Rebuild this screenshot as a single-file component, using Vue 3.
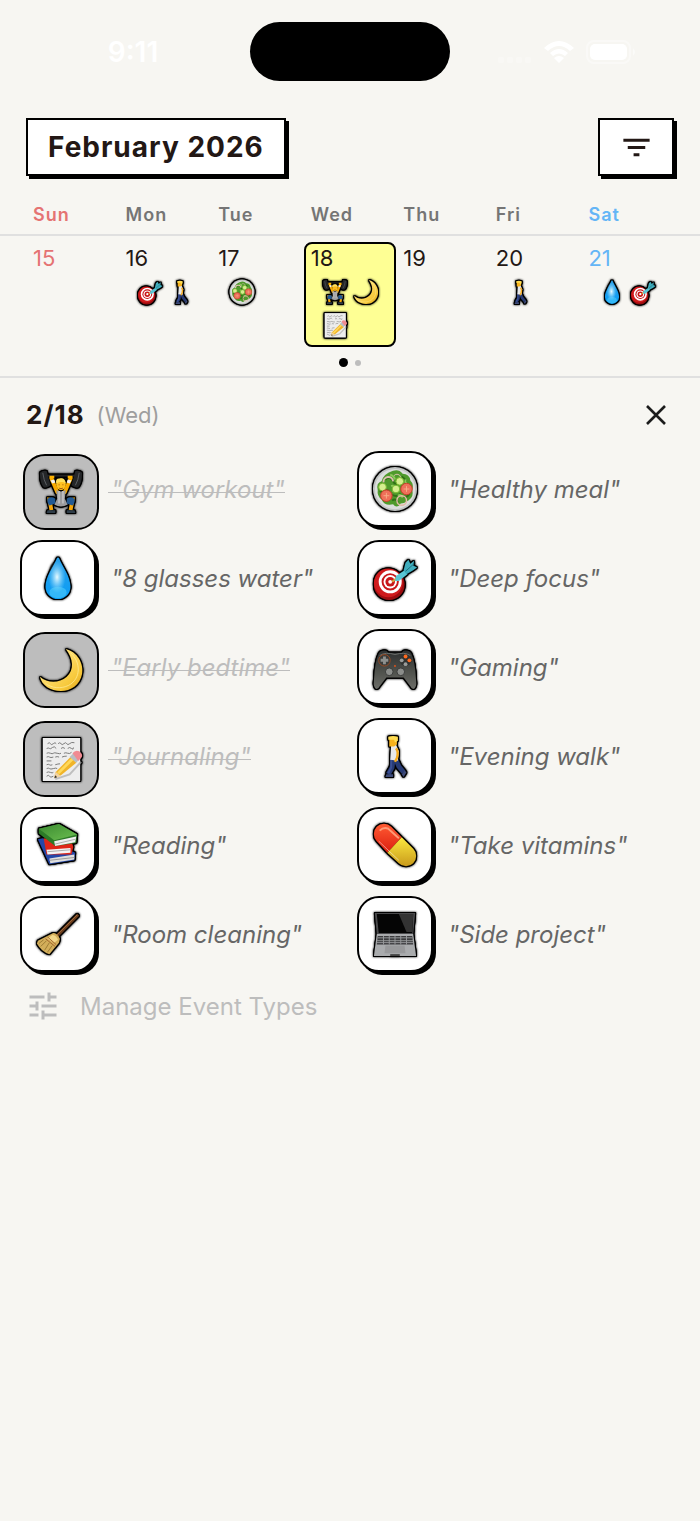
<template>
  <div class="page">
    <!-- icon sprites -->
    <svg class="sprites" aria-hidden="true">
      <defs>
        <linearGradient id="g-drop" x1="0" y1="0" x2="0" y2="1">
          <stop offset="0" stop-color="#2a9fe8" />
          <stop offset="1" stop-color="#0a9df5" />
        </linearGradient>
        <radialGradient id="g-drop-in" cx="0.5" cy="0.5" r="0.5">
          <stop offset="0" stop-color="#e9fbff" />
          <stop offset="1" stop-color="#8fdcff" stop-opacity="0" />
        </radialGradient>
        <linearGradient id="g-moon" x1="0" y1="0" x2="1" y2="1">
          <stop offset="0.3" stop-color="#ffe27a" />
          <stop offset="0.75" stop-color="#f7c83a" />
          <stop offset="1" stop-color="#d79a16" />
        </linearGradient>
        <linearGradient id="g-pad" x1="0" y1="0" x2="0" y2="1">
          <stop offset="0" stop-color="#2c2f30" />
          <stop offset="0.5" stop-color="#4c4e49" />
          <stop offset="1" stop-color="#6c6d68" />
        </linearGradient>
        <linearGradient id="g-green" x1="0" y1="0" x2="1" y2="1">
          <stop offset="0" stop-color="#3b8a31" />
          <stop offset="1" stop-color="#6cbf50" />
        </linearGradient>
        <linearGradient id="g-red" x1="0" y1="0" x2="0" y2="1">
          <stop offset="0" stop-color="#ff5a32" />
          <stop offset="1" stop-color="#dc1f10" />
        </linearGradient>
        <linearGradient id="g-yellow" x1="0" y1="0" x2="0" y2="1">
          <stop offset="0" stop-color="#fbe93f" />
          <stop offset="1" stop-color="#c99a1b" />
        </linearGradient>
      </defs>

      <symbol id="icon-gym" viewBox="0 0 48 48">
        <path d="M8 7 40 7" stroke="#222" stroke-width="2" />
        <path d="M2 4Q5 1 9 2L13 17Q10 20 6 19Q2 15 2 4ZM46 4Q43 1 39 2L35 17Q38 20 42 19Q46 15 46 4Z" fill="#242628" />
        <path d="M5 4Q6 12 9 17M43 4Q42 12 39 17" fill="none" stroke="#5c6064" stroke-width="1" />
        <path d="M14 10 20 24M34 10 28 24" stroke="#f7a900" stroke-width="4" stroke-linecap="round" />
        <path d="M12 7h5v3h-5zM31 7h5v3h-5z" fill="#ffb300" />
        <path d="M13 12l4-1 1 3-3 1zM35 12l-4-1-1 3 3 1z" fill="#f2f2f2" />
        <path d="M19 22Q24 25 29 22L28 31 31 37Q24 41 17 37L20 31Z" fill="#9b9b9d" />
        <path d="M22 23 22 36M26 23 26 36" stroke="#bcbcbe" stroke-width="2" />
        <path d="M17 33 12 32 14 43M31 33 36 32 34 43" fill="none" stroke="#f5a60a" stroke-width="4" />
        <path d="M10 31Q14 28 18 31L18 36 12 38Q9 35 10 31ZM38 31Q34 28 30 31L30 36 36 38Q39 35 38 31Z" fill="#235a94" />
        <path d="M10 43H18V46H9ZM30 43H38L39 46H30Z" fill="#2e3c48" />
        <ellipse cx="24" cy="16" rx="5" ry="6" fill="#ffc020" />
        <path d="M19 15Q18 10 22 10 28 8 29 15Q25 12 19 15Z" fill="#ffe05c" />
        <path d="M22 16v1M26 16v1M22 20q2 1 4 0" stroke="#9a5810" stroke-width="1" fill="none" />
      </symbol>

      <symbol id="icon-drop" viewBox="0 0 48 48">
        <path d="M23 3Q24 2 25 3C29 13 37 22 37 33A13 13 0 0 1 11 33C11 22 19 13 23 3Z" fill="url(#g-drop)" />
        <ellipse cx="23" cy="23" rx="9" ry="17" fill="url(#g-drop-in)" />
        <ellipse cx="24" cy="39" rx="9" ry="6" fill="#6fe0ff" opacity="0.4" />
      </symbol>

      <symbol id="icon-moon" viewBox="0 0 48 48">
        <path d="M29 2C41 5 48 17 46 28 44 40 34 46 24 46 13 46 4 40 2 31 10 38 22 38 30 31 38 24 37 12 29 2Z" fill="url(#g-moon)" />
        <path d="M34 6C45 16 45 33 32 40 24 44 14 43 8 38" fill="none" stroke="#fff0a0" stroke-width="1" opacity="0.7" />
      </symbol>

      <symbol id="icon-note" viewBox="0 0 48 48">
        <path d="M5 2H44V47H5Z" fill="#ededed" />
        <g fill="none" stroke="#777" stroke-width="1">
          <path d="M10 8q2-2 3 0t3 0 3 0M21 8q2-2 3 0t3 0 3 0 3 0 5-1" />
          <path d="M9 13q2-1 3 0t3-1 4 1M24 13q2-2 4 0M31 13q2-2 4 0t2-1" />
          <path d="M9 18q2-1 4 0t3 0 4 0 4 0M27 18q2-1 4 0t4-1" />
          <path d="M9 22q2-1 3 0t4 0M18 22q2-1 4 0M25 22q2-1 5-1" />
          <path d="M9 26h5M9 30q2-1 3 0t3 0M18 30q3-1 5-1M9 34q2-1 3 0t4 0 4 0M9 38q2-1 4 0t3 0M9 42q2-2 3 0t4 0" />
        </g>
        <path d="M18 45 33 40 45 27" fill="none" stroke="#aaa" stroke-width="2" opacity="0.7" />
        <path d="M18 38 34 22 40 28 24 41 17 44Z" fill="#f0b429" />
        <path d="M20 38 35 23 37 25 22 40Z" fill="#ffd95a" />
        <path d="M18 37 24 42 17 44Z" fill="#f2d3a0" />
        <path d="M17 44 18 41 20 43Z" fill="#333" />
        <path d="M33 22 37 18 43 24 40 28Z" fill="#b7bec4" />
        <path d="M36 18Q39 14 43 16 48 20 45 23L42 26Z" fill="#f08a92" />
      </symbol>

      <symbol id="icon-books" viewBox="0 0 48 48">
        <path d="M3 18 8 17 42 32 41 40 15 44Z" fill="#2447a8" />
        <path d="M15 38 41 34 41 39 16 43Z" fill="#dedede" />
        <path d="M15 40 41 37" stroke="#999" stroke-width="1" />
        <path d="M9 17 38 20 40 26 38 34 12 34Z" fill="#df2618" />
        <path d="M12 29 37 27 37 32 13 34Z" fill="#f4f4f4" />
        <path d="M13 31 37 29" stroke="#aaa" stroke-width="1" />
        <path d="M4 7 25 2 44 13 43 22 21 25 4 12Z" fill="#2d7a28" />
        <path d="M4 7 25 2 44 13 20 19Z" fill="url(#g-green)" />
        <path d="M20 20 43 15 42 21 21 25Z" fill="#efefef" />
        <path d="M21 23 42 18" stroke="#aaa" stroke-width="1" />
      </symbol>

      <symbol id="icon-broom" viewBox="0 0 48 48">
        <path d="M22 27 45 4" stroke="#6b3d1c" stroke-width="3" />
        <path d="M22 26 44 4" stroke="#a0683b" stroke-width="1" />
        <path d="M19 23Q23 23 26 29L25 33 15 45Q7 43 2 34L3 31Z" fill="#d3ae5a" />
        <path d="M18 25Q22 25 24 30L20 33 13 29Z" fill="#f3d789" />
        <path d="M13 27 22 35M11 29 21 37" stroke="#a2622c" stroke-width="1" />
        <path d="M12 31 6 37M15 33 10 41M18 36 13 43M9 30 4 34" stroke="#9b7a33" stroke-width="1" />
      </symbol>

      <symbol id="icon-salad" viewBox="0 0 48 48">
        <circle cx="24" cy="24" r="23" fill="#c0c3c2" />
        <circle cx="24" cy="24" r="21" fill="#dcdedd" />
        <path d="M22 5Q28 3 32 8 39 8 40 15 44 19 42 25 44 32 38 36 34 39 30 39 26 45 22 40 13 42 10 35 5 31 6 25 4 18 10 16 12 8 22 5Z" fill="#4f9a2c" />
        <path d="M14 14q5-4 8 2t8-2M8 27q6-3 10-1M21 30q5 3 9-1M31 11q5 3 5 9M21 36q4-3 6 2M33 32q4 1 6-3" fill="none" stroke="#2f7017" stroke-width="2" />
        <path d="M19 9q4 1 5 5M35 14q-1 5 4 6M20 21q4-2 2 6M27 31q3-2 5 2" fill="none" stroke="#8bc95a" stroke-width="2" />
        <path d="M12 17a5 5 0 0 1 10-1" fill="none" stroke="#dcc0ae" stroke-width="2" />
        <path d="M23 10a4 4 0 0 1 7 2" fill="none" stroke="#dcc0ae" stroke-width="1" />
        <g fill="#d5ef8f" stroke="#76b62e" stroke-width="1">
          <circle cx="11" cy="22" r="4" />
          <circle cx="29" cy="16" r="4" />
          <circle cx="25" cy="24" r="4" />
        </g>
        <g fill="#ee705a" stroke="#cc3a2a" stroke-width="1">
          <circle cx="15" cy="31" r="6" />
          <circle cx="36" cy="24" r="6" />
        </g>
        <path d="M15 28v6M12 31h6M36 21v6M33 24h6" stroke="#f8ac86" stroke-width="1" />
        <circle cx="31" cy="36" r="5" fill="none" stroke="#e3b9a8" stroke-width="1.5" />
      </symbol>

      <symbol id="icon-target" viewBox="0 0 48 48">
        <circle cx="18" cy="31" r="16" fill="#9c0d10" />
        <circle cx="17" cy="29" r="15" fill="#cf1a1c" />
        <g transform="translate(19 28)">
          <circle r="12" fill="#fff" />
          <circle r="9" fill="#c9171a" />
          <circle r="7" fill="#fff" />
          <circle r="5" fill="#c9171a" />
          <circle r="2" fill="#fff" />
        </g>
        <path d="M21 28 26 24" stroke="#d9a43c" stroke-width="2" />
        <path d="M25 22 34 16 37 20 28 27 24 27Z" fill="#58c5d4" />
        <path d="M33 16 35 8 38 5 40 9 44 6 43 11 47 13 43 16 36 20Z" fill="#3fadbd" />
        <path d="M35 17 44 9" stroke="#1b6f7d" stroke-width="1" />
      </symbol>

      <symbol id="icon-gamepad" viewBox="0 0 48 48">
        <path d="M7 10Q9 6 15 7L17 9H31L33 7Q39 6 41 10 45 18 46 38 47 46 43 47 41 46 40 44L33 35H15L8 44Q7 46 5 47 1 46 2 38 3 18 7 10Z" fill="url(#g-pad)" />
        <path d="M8 12Q14 8 24 11 34 8 40 12" fill="none" stroke="#6b6e6b" stroke-width="1" />
        <circle cx="13" cy="17" r="6" fill="#3b3c3a" stroke="#9b4a22" stroke-width="1" />
        <path d="M13 13v8M9 17h8" stroke="#8e908e" stroke-width="3" />
        <circle cx="35" cy="17" r="6" fill="#303230" />
        <circle cx="35" cy="13" r="2" fill="#ff6a1f" />
        <circle cx="39" cy="17" r="2" fill="#ff6a1f" />
        <circle cx="31" cy="17" r="2" fill="#9a9c9a" />
        <circle cx="35" cy="21" r="2" fill="#9a9c9a" />
        <circle cx="24" cy="23" r="1" fill="#e2531a" />
        <g fill="#8b8d8a" stroke="#3a3b39" stroke-width="1">
          <circle cx="18" cy="29" r="4" />
          <circle cx="30" cy="29" r="4" />
        </g>
      </symbol>

      <symbol id="icon-walk" viewBox="0 0 48 48">
        <path d="M22 27 21 36 17 43M25 28 28 35 33 41" fill="none" stroke="#273a73" stroke-width="5" />
        <path d="M20 27 20 36 17 42" fill="none" stroke="#3a4f94" stroke-width="2" />
        <path d="M15 43H22V46H14ZM31 43 34 39 36 41 33 46Z" fill="#3d4a78" />
        <path d="M20 12H25L28 19 27 29 19 28Z" fill="#e8e8ea" />
        <path d="M25 16Q28 19 26 26L24 30" fill="none" stroke="#f5aa1c" stroke-width="2.5" />
        <path d="M18 5H26V12L23 14H18Z" fill="#f8b21c" />
        <path d="M17 4Q22 2 27 4V8L24 10 23 7H17Z" fill="#ffdc52" />
      </symbol>

      <symbol id="icon-pill" viewBox="0 0 48 48">
        <path d="M16 32 5 20A10 10 0 0 1 20 5L31 16Z" fill="url(#g-red)" />
        <path d="M31 16 43 28A10 10 0 0 1 28 43L16 32Z" fill="url(#g-yellow)" />
        <path d="M8 9Q12 5 17 7L28 17" fill="none" stroke="#ff9a76" stroke-width="2" />
        <path d="M7 20 28 40" stroke="#fff" stroke-width="1" opacity="0.5" />
      </symbol>

      <symbol id="icon-laptop" viewBox="0 0 48 48">
        <path d="M3 2H45L43 24H5Z" fill="#4a4a4c" />
        <path d="M5 3H43L42 23H7Z" fill="#050505" />
        <path d="M28 3H43L42 22H36Z" fill="#333" />
        <path d="M5 24H43L46 47H2Z" fill="#a9abad" />
        <path d="M6 26H42L43 35H5Z" fill="#3b3b3d" />
        <path d="M6 28H42M5 31H43M5 33H43" stroke="#97999b" stroke-width="1" />
        <path d="M12 26v9M18 26v9M24 26v9M30 26v9M36 26v9" stroke="#97999b" stroke-width="1" />
        <path d="M14 36H34L35 44H13Z" fill="#98999b" />
        <path d="M19 46H29" stroke="#444" stroke-width="2" />
      </symbol>
    </svg>

    <div class="status-bar">
      <div class="status-time">9:11</div>
      <div class="island"></div>
      <div class="status-icons">
        <svg width="36" height="8" viewBox="0 0 36 8" class="signal">
          <rect v-for="n in 4" :key="n" :x="n * 9 - 7" y="1" width="6" height="6" rx="2" fill="#fff" />
        </svg>
        <svg width="32" height="24" viewBox="0 0 32 24">
          <path d="M1 8Q16-6 31 8L27 11Q16 1 5 11Z" fill="#fff" />
          <path d="M7 13Q16 5 25 13L22 16Q16 11 10 16Z" fill="#fff" />
          <path d="M11 18Q16 14 21 18L16 23Z" fill="#fff" />
        </svg>
        <svg width="50" height="24" viewBox="0 0 50 24">
          <rect x="1" y="1" width="43" height="22" rx="7" fill="none" stroke="#fff" stroke-width="2" opacity="0.4" />
          <rect x="4" y="4" width="37" height="16" rx="5" fill="#fff" />
          <path d="M47 8q4 4 0 8z" fill="#fff" opacity="0.5" />
        </svg>
      </div>
    </div>

    <header class="toolbar">
      <button class="box-btn month" type="button">February 2026</button>
      <button class="box-btn filter" type="button" aria-label="Filter">
        <svg width="35" height="35" viewBox="0 0 24 24">
          <path d="M10 18h4v-2h-4v2zM3 6v2h18V6H3zm3 7h12v-2H6v2z" fill="#231815" />
        </svg>
      </button>
    </header>

    <section class="calendar">
      <div class="week names">
        <div v-for="d in days" :key="d.name" class="day-name" :class="d.tone">{{ d.name }}</div>
      </div>
      <div class="week dates">
        <div v-for="d in days" :key="d.date" class="day" :class="{ selected: d.date === 18 }">
          <div class="day-num" :class="d.tone">{{ d.date }}</div>
          <div class="day-events">
            <svg v-for="icon in d.icons" :key="icon" class="emoji" width="26" height="26">
              <use :href="`#icon-${icon}`" />
            </svg>
          </div>
        </div>
      </div>
      <div class="pager">
        <span class="dot active"></span>
        <span class="dot"></span>
      </div>
    </section>

    <section class="detail">
      <div class="detail-head">
        <h2 class="detail-date">2/18</h2>
        <span class="detail-day">(Wed)</span>
        <button class="close" type="button" aria-label="Close">
          <svg width="36" height="36" viewBox="0 0 36 36">
            <path d="M9 9 27 27M27 9 9 27" stroke="#1c1c1c" stroke-width="2.6" />
          </svg>
        </button>
      </div>

      <div class="events">
        <button
          v-for="e in events"
          :key="e.label"
          class="event"
          :class="{ done: e.done }"
          :aria-pressed="!!e.done"
          type="button"
        >
          <span class="tile">
            <svg class="emoji" width="46" height="46"><use :href="`#icon-${e.icon}`" /></svg>
          </span>
          <span class="label">"{{ e.label }}"</span>
        </button>
      </div>

      <button class="manage" type="button">
        <svg width="36" height="36" viewBox="0 0 24 24">
          <path d="M3 17v2h6v-2H3zM3 5v2h10V5H3zm10 16v-2h8v-2h-8v-2h-2v6h2zM7 9v2H3v2h4v2h2V9H7zm14 4v-2H11v2h10zm-6-4h2V7h4V5h-4V3h-2v6z" fill="#bdbdbd" />
        </svg>
        <span>Manage Event Types</span>
      </button>
    </section>
  </div>
</template>

<script setup>
const days = [
  { name: 'Sun', date: 15, tone: 'sun', icons: [] },
  { name: 'Mon', date: 16, icons: ['target', 'walk'] },
  { name: 'Tue', date: 17, icons: ['salad'] },
  { name: 'Wed', date: 18, icons: ['gym', 'moon', 'note'] },
  { name: 'Thu', date: 19, icons: [] },
  { name: 'Fri', date: 20, icons: ['walk'] },
  { name: 'Sat', date: 21, tone: 'sat', icons: ['drop', 'target'] }
]

const events = [
  { label: 'Gym workout', icon: 'gym', done: true },
  { label: 'Healthy meal', icon: 'salad' },
  { label: '8 glasses water', icon: 'drop' },
  { label: 'Deep focus', icon: 'target' },
  { label: 'Early bedtime', icon: 'moon', done: true },
  { label: 'Gaming', icon: 'gamepad' },
  { label: 'Journaling', icon: 'note', done: true },
  { label: 'Evening walk', icon: 'walk' },
  { label: 'Reading', icon: 'books' },
  { label: 'Take vitamins', icon: 'pill' },
  { label: 'Room cleaning', icon: 'broom' },
  { label: 'Side project', icon: 'laptop' }
]
</script>

<style>
body {
  margin: 0;
  background: #f7f6f2;
}
</style>

<style scoped>
.page {
  min-height: 100vh;
  background: #f7f6f2;
  color: #231815;
  font-family: Inter, "Liberation Sans", sans-serif;
}

button {
  padding: 0;
  border: 0;
  background: none;
  color: inherit;
  font: inherit;
  cursor: pointer;
}

svg {
  display: block;
}

.sprites {
  position: absolute;
  width: 0;
  height: 0;
}

.status-bar {
  display: grid;
  grid-template-columns: 1fr 200px 1fr;
  align-items: center;
  padding-top: 22px;
  color: #fff;
}

.status-time {
  padding-left: 16px;
  text-align: center;
  font-size: 28px;
  font-weight: 600;
}

.island {
  height: 59px;
  border-radius: 30px;
  background: #000;
}

.status-icons {
  display: flex;
  align-items: center;
  justify-content: center;
  gap: 11px;
  padding-right: 18px;
}

.signal {
  align-self: flex-end;
  opacity: 0.3;
}

.toolbar {
  display: flex;
  justify-content: space-between;
  padding: 37px 26px 0;
}

.box-btn {
  box-sizing: border-box;
  height: 58px;
  border: 2px solid #000;
  background: #fff;
  box-shadow: 3px 3px 0 #000;
}

.month {
  padding: 0 20px;
  font-size: 28px;
  font-weight: 700;
  letter-spacing: 1px;
}

.filter {
  display: flex;
  align-items: center;
  justify-content: center;
  width: 76px;
}

.calendar {
  border-bottom: 2px solid #e0e0e0;
}

.week {
  display: grid;
  grid-template-columns: repeat(7, 1fr);
  padding: 0 26px;
}

.names {
  padding-top: 26px;
  border-bottom: 2px solid #e0e0e0;
}

.day-name {
  padding: 0 7px 7px;
  font-size: 18px;
  font-weight: 600;
  line-height: 25px;
  letter-spacing: 1px;
  color: #757575;
}

.dates {
  padding-top: 6px;
}

.day {
  box-sizing: border-box;
  height: 105px;
  padding: 0 5px;
  border: 2px solid transparent;
  border-radius: 8px;
}

.selected {
  border-color: #000;
  background: #feff94;
}

.day-num {
  font-size: 22px;
  line-height: 28px;
}

.day-num.sun,
.day-name.sun {
  color: #e57373;
}

.day-num.sat,
.day-name.sat {
  color: #64b5f6;
}

.day-events {
  display: flex;
  flex-wrap: wrap;
  gap: 7px 5px;
  padding: 7px 0 0 11px;
}

.day-events .emoji {
  flex: none;
}

/* dark sticker outline around each icon */
.emoji {
  filter: drop-shadow(1px 0 #000) drop-shadow(-1px 0 #000) drop-shadow(0 1px #000) drop-shadow(0 -1px #000) drop-shadow(0 0 1px #000);
}

.pager {
  display: flex;
  align-items: center;
  justify-content: center;
  gap: 7px;
  padding-top: 2px;
  height: 27px;
}

.dot {
  width: 6px;
  height: 6px;
  border-radius: 50%;
  background: #bdbdbd;
}

.dot.active {
  width: 9px;
  height: 9px;
  background: #000;
}

.detail {
  padding: 0 20px;
}

.detail-head {
  display: flex;
  align-items: center;
  gap: 12px;
  height: 73px;
  padding: 0 6px;
}

.detail-date {
  margin: 0;
  font-size: 26px;
  font-weight: 700;
  letter-spacing: 1px;
}

.detail-day {
  font-size: 22px;
  color: #9e9e9e;
}

.close {
  margin-left: auto;
}

.events {
  display: grid;
  grid-template-columns: 1fr 1fr;
  gap: 13px 14px;
}

.event {
  display: flex;
  align-items: center;
  gap: 12px;
  color: #666;
  text-align: left;
}

.tile {
  display: flex;
  flex: none;
  align-items: center;
  justify-content: center;
  box-sizing: border-box;
  width: 76px;
  height: 76px;
  border: 2px solid #000;
  border-radius: 22px;
  background: #fff;
  box-shadow: 3px 3px 0 #000;
}

.label {
  padding-left: 3px;
  font-size: 24px;
  font-style: italic;
  white-space: nowrap;
}

.done {
  color: #bdbdbd;
}

/* strike line starts a little before the slanted text */
.done .label {
  background: linear-gradient(currentColor, currentColor) 0 64% / 100% 1px no-repeat;
}

.done .tile {
  background: #bdbdbd;
  box-shadow: none;
  transform: translate(3px, 3px);
}

.manage {
  display: flex;
  align-items: center;
  gap: 19px;
  padding: 16px 5px;
  font-size: 24px;
  color: #bdbdbd;
}
</style>
